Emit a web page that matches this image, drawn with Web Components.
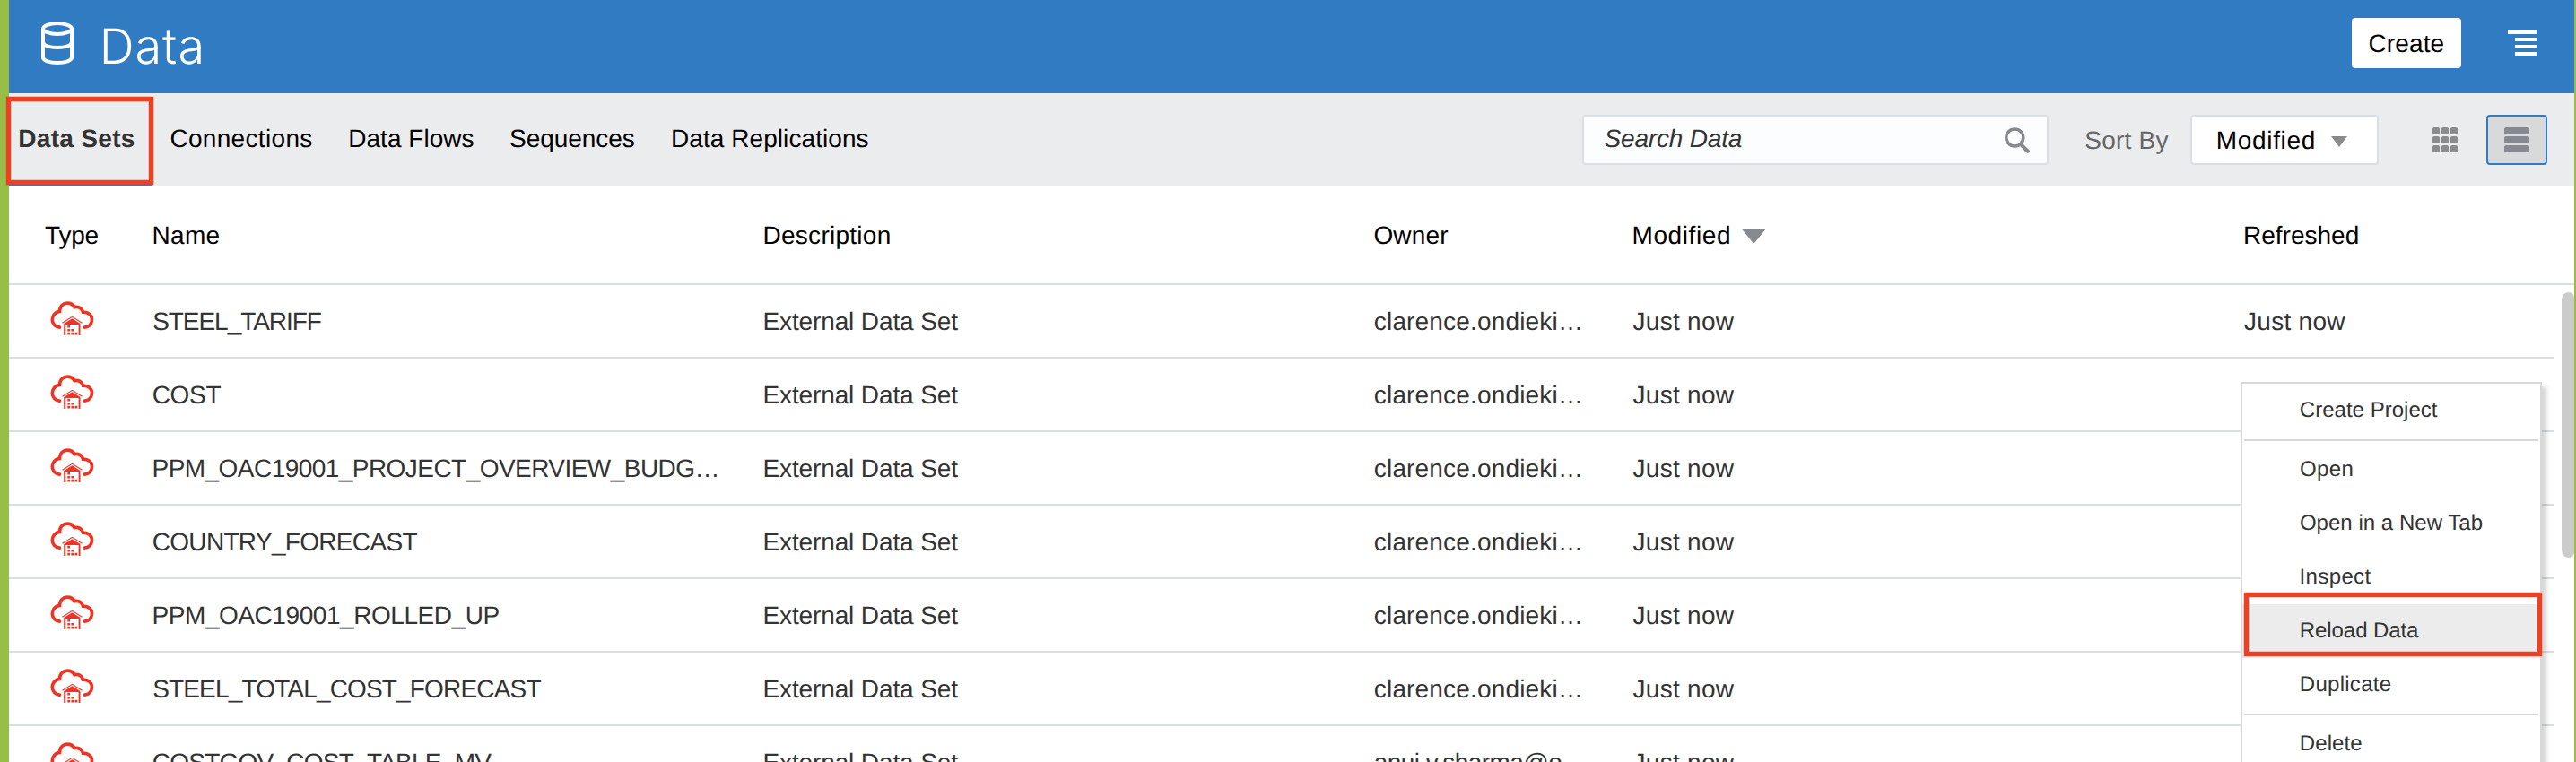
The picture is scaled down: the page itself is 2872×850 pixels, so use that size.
<!DOCTYPE html>
<html lang="en">
<head>
<meta charset="utf-8">
<title>Data</title>
<style>
html,body{margin:0;height:100%;overflow:hidden;background:#fff}
body{font-family:"Liberation Sans",Arial,sans-serif;font-size:28px;color:#333;text-rendering:geometricPrecision}
</style>
</head>
<body>
<data-page></data-page>
<script>
const define = (name, html, init) => {
  const tpl = document.createElement('template');
  tpl.innerHTML = html;
  customElements.define(name, class extends HTMLElement {
    constructor() {
      super();
      this.attachShadow({ mode: 'open' }).append(tpl.content.cloneNode(true));
    }
    connectedCallback() { if (init) init(this, this.shadowRoot); }
  });
};

/* A label whose tracking is adjusted so its glyphs span the given width.
   Measured at ten times the size, where glyph bounds are not rounded.
   Initials with a straight stem keep a little more side bearing. */
const ctx = document.createElement('canvas').getContext('2d');
define('fit-label', `<style>:host{display:block;white-space:nowrap;line-height:31px;margin-top:1px}</style><slot></slot>`, el => {
  const t = el.textContent, bearing = /^[DEIMNPR]/.test(t) ? .7 : 0, w = +el.getAttribute('w') - bearing;
  const cs = getComputedStyle(el);
  ctx.font = `${cs.fontStyle} ${cs.fontWeight} ${parseFloat(cs.fontSize) * 10}px ${cs.fontFamily}`;
  const m = ctx.measureText(t);
  const left = m.actualBoundingBoxLeft / 10, right = m.actualBoundingBoxRight / 10;
  el.style.letterSpacing = ((w - right - left) / (t.length - 1)).toFixed(3) + 'px';
  el.style.textIndent = (left + bearing).toFixed(2) + 'px';
});

define('db-icon', `<style>:host{display:block;width:36px;height:48px}svg{display:block}</style>
<svg width="36" height="48" fill="none" stroke="#fff" stroke-width="4"><ellipse cx="18" cy="8" rx="16" ry="6"/><path d="M2 8V40C2 43.5 9 46 18 46S34 43.500 34 40V8M2 23C2 26.500 9 29 18 29S34 26.500 34 23"/></svg>`);

define('cloud-icon', `<style>:host{display:block;width:50px;height:40px}svg{display:block}</style>
<svg width="50" height="40" fill="none"><path d="M10.500 29.100C5.700 28.600 2.300 25.200 2.300 20.500C2.300 15.500 6 11.700 10.500 11.300C10.500 5.500 14.500 2.100 19 2.100C23 2.100 25.500 3.800 27 6.600C31.500 5.500 35.500 8 36.600 12.200C42.500 12 46.500 15.500 46.500 20.500C46.500 25.200 43.200 28.700 38.300 29.100" stroke="#f13325" stroke-width="3.700" stroke-linecap="round"/><path d="M13.500 24.200L24.500 17.300L35.500 24.200" stroke="#f13325" stroke-width="1.100"/><path d="M15.200 25L24.500 19.300L33.500 25V38H31.600V26H17.200V38H15.200Z" fill="#f13325"/><path d="M19.300 26.800h2.800v2.600h-2.800zM19.300 30.900h2.800v2.600h-2.800zM23.400 30.900h2.800v2.600h-2.800zM19.300 34.800h2.800v2.700h-2.800zM23.400 34.800h2.800v2.700h-2.800zM27.500 34.800h2.800v2.700h-2.800z" fill="#f13325"/></svg>`);

define('search-icon', `<style>:host{display:block;width:28px;height:29px}svg{display:block}</style>
<svg width="28" height="29" fill="none" stroke="#86898d"><circle cx="11.300" cy="11.500" r="9.500" stroke-width="3.500"/><path d="M18 19L25.800 26.700" stroke-width="4.200" stroke-linecap="round"/></svg>`);

define('menu-icon', `<style>:host{display:flex;flex-direction:column;align-items:flex-end;gap:4px;width:32px}i{width:24px;height:4px;background:#fff}i:first-of-type{width:32px}</style><i></i><i></i><i></i><i></i>`);

define('grid-icon', `<style>:host{display:grid;grid-template-columns:repeat(3,8px);gap:2px}i{height:8px;border-radius:2px;background:#8a8b8d}</style>${'<i></i>'.repeat(9)}`);

define('list-icon', `<style>:host{display:grid;gap:2px;width:28px}i{height:8px;border-radius:2px;background:#868a90}</style>${'<i></i>'.repeat(3)}`);

define('sort-arrow', `<style>:host{display:block;width:26px;height:16px;background:#878a8f;clip-path:polygon(0 0,100% 0,50% 100%)}</style>`);

define('app-header', `<style>
:host{display:flex;height:104px;box-sizing:border-box;background:#307bc2;padding:0 42px 8px 36px;align-items:center}
fit-label.t{font:300 54px/65px Inter,"Liberation Sans",sans-serif;color:#fff;margin:9px 0 0 33px}
.create{margin-left:auto;width:122px;height:56px;box-sizing:border-box;padding:0 0 0 19.800px;background:#fff;border-radius:4px;color:#000;display:flex;align-items:center}
menu-icon{margin-left:52px}
</style><db-icon></db-icon><fit-label class="t" w="108.700">Data</fit-label><div class="create"><fit-label w="82.200">Create</fit-label></div><menu-icon></menu-icon>`);

define('tab-bar', `<style>
:host{display:flex;color:#000;height:104px}
.tab{box-sizing:border-box;padding:34px 0 0;height:104px}
.sel{width:160px;padding-left:11.300px;border-bottom:2px solid #307bc2;color:#333;font-weight:bold}
.c{margin-left:20.700px;width:199px}.f{width:179.200px}.s{width:180.600px}
</style><div class="tab sel"><fit-label w="128">Data Sets</fit-label></div><div class="tab c"><fit-label w="156.700">Connections</fit-label></div><div class="tab f"><fit-label w="138">Data Flows</fit-label></div><div class="tab s"><fit-label w="138">Sequences</fit-label></div><div class="tab"><fit-label w="218.200">Data Replications</fit-label></div>`);

define('tool-bar', `<style>
:host{display:flex;height:104px;background:#ebecee;align-items:center;padding-right:30px}
tab-bar{margin-right:auto}
.search{width:520px;height:56px;box-sizing:border-box;border:2px solid #d8dfe4;border-radius:4px;background:#fcfdfe;display:flex;align-items:center;justify-content:space-between;padding:0 19px 0 23px;font-style:italic}
.search fit-label{margin:0 0 3px}
.by{color:#666;margin-left:41.200px;width:116.800px}
.drop{width:210px;height:56px;box-sizing:border-box;border:2px solid #d8dfe4;border-radius:4px;background:#fff;display:flex;align-items:center;color:#000;padding-left:28.200px}
.drop fit-label{width:126.800px}
.drop sort-arrow{width:18px;height:12px;margin-top:4px;background:#8a8b8d}
grid-icon{margin:0 32px 0 60px}
.list{width:68px;height:56px;box-sizing:border-box;border:2px solid #307bc2;border-radius:4px;background:#d8d9da;display:grid;place-content:center}
</style><tab-bar></tab-bar><div class="search"><fit-label w="152.700">Search Data</fit-label><search-icon></search-icon></div><fit-label class="by" w="92.300">Sort By</fit-label><div class="drop"><fit-label w="107.600">Modified</fit-label><sort-arrow></sort-arrow></div><grid-icon></grid-icon><div class="list"><list-icon></list-icon></div>`);

const columns = 'grid-template-columns:120.500px 681px 680.700px 288.300px 681.500px 1fr;align-items:center';
define('table-head', `<style>
:host{display:grid;${columns};height:110px;box-sizing:border-box;border-bottom:2px solid #d9dfe3;color:#000;padding-left:40.500px}
.m{display:flex;align-items:center}.m fit-label{width:121.300px}.m sort-arrow{margin-top:4px}
</style><fit-label w="58.500">Type</fit-label><fit-label w="73">Name</fit-label><fit-label w="139.700">Description</fit-label><fit-label w="81.700">Owner</fit-label><div class="m"><fit-label w="107">Modified</fit-label><sort-arrow></sort-arrow></div><fit-label w="126.200">Refreshed</fit-label>`);

define('table-row', `<style>
:host{display:grid;${columns};height:82px;box-sizing:border-box;border-bottom:2px solid #d9dfe3;padding-left:40.500px;margin-right:22px}
cloud-icon{margin:-4px 0 0 5px}
</style><cloud-icon></cloud-icon><slot></slot>`);

const rows = [
  ['STEEL_TARIFF', 187], ['COST', 75], ['PPM_OAC19001_PROJECT_OVERVIEW_BUDG…', 628], ['COUNTRY_FORECAST', 294],
  ['PPM_OAC19001_ROLLED_UP', 385], ['STEEL_TOTAL_COST_FORECAST', 432], ['COSTGOV_COST_TABLE_MV', 377]
];
define('data-table', `<style>:host{display:block;background:#fff}</style><table-head></table-head>` +
  rows.map(([n, w], i) => `<table-row><fit-label w="${w}">${n}</fit-label><fit-label w="216">External Data Set</fit-label>${i < 6 ? '<fit-label w="228.700">clarence.ondieki…</fit-label>' : '<fit-label w="233">anuj.v.sharma@o…</fit-label>'}<fit-label w="112.300">Just now</fit-label>${i ? '' : '<fit-label w="112.300">Just now</fit-label>'}</table-row>`).join(''));

define('menu-item', `<style>:host{display:block;height:60px;box-sizing:border-box;padding:15px 0 0 65px;font-size:24px}:host([active]){background:#ececec}::slotted(fit-label){line-height:27px}</style><slot></slot>`);

define('context-menu', `<style>
:host{display:block;width:336px;height:480px;box-sizing:border-box;border:2px solid #d6d8d9;background:#fff;box-shadow:5px 5px 5px rgba(0,0,0,.16)}
hr{margin:2px;border:0;height:2px;background:#d6d8d9}
</style><menu-item><fit-label w="152.300">Create Project</fit-label></menu-item><hr><menu-item><fit-label w="57.300">Open</fit-label></menu-item><menu-item><fit-label w="202.500">Open in a New Tab</fit-label></menu-item><menu-item><fit-label w="78">Inspect</fit-label></menu-item><menu-item active><fit-label w="131.500">Reload Data</fit-label></menu-item><menu-item><fit-label w="100">Duplicate</fit-label></menu-item><hr><menu-item><fit-label w="67.500">Delete</fit-label></menu-item>`);

/* Red frame drawn over the element it points out. */
define('call-out', `<style>:host{position:absolute;box-sizing:border-box;border:5px solid #ee4023;box-shadow:0 0 0 .5px #ee402380,inset 0 0 0 .5px #ee402380}</style>`);

define('data-page', `<style>
:host{display:block;position:relative;height:850px;box-sizing:border-box;overflow:clip;overflow-clip-margin:10px;border-left:10px solid #97be49;border-right:2px solid #97be49}
.thumb{position:absolute;left:2846px;top:326px;width:14px;height:296px;border-radius:8px 6px 6px 8px;background:#cbcbcb}
context-menu{position:absolute;left:2488px;top:426px}
.view{position:absolute;inset:0 0 0 -10px;pointer-events:none}
.a{left:7px;top:107.500px;width:164px;height:98.500px}
.b{left:2502px;top:660.500px;width:331.500px;height:71px}
</style><app-header></app-header><tool-bar></tool-bar><data-table></data-table><div class="thumb"></div><context-menu></context-menu><div class="view"><call-out class="a"></call-out><call-out class="b"></call-out></div>`);
</script>
</body>
</html>
